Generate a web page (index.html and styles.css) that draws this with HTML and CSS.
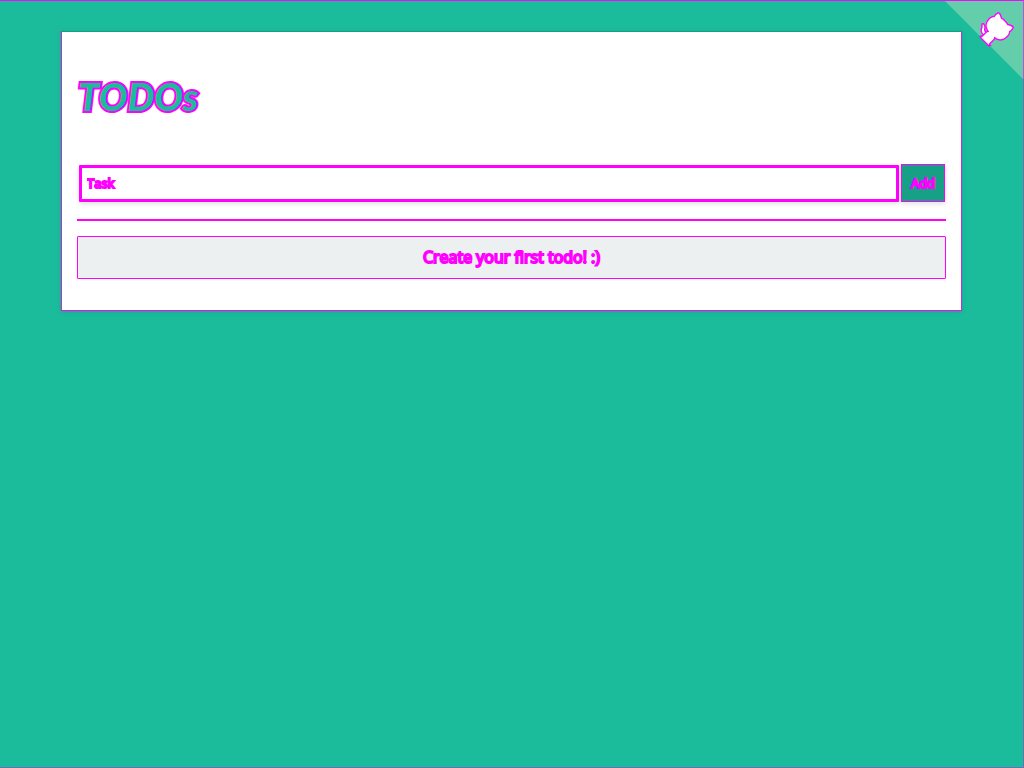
FILE: index.html
```html
<!DOCTYPE html>
<html lang="en">
<head>
<meta charset="utf-8">
<meta name="viewport" content="width=device-width, initial-scale=1">
<title>TODOs</title>
<link rel="stylesheet" href="styles.css">
</head>
<body>
<a class="github-corner" href="#" aria-label="View source on GitHub">
<svg viewBox="0 0 250 250" aria-hidden="true">
<path class="corner-bg" d="M0,0 L115,115 L130,115 L142,142 L250,250 L250,0 Z"/>
<path class="octo" d="M128.3,109.0 C113.8,99.7 119.0,89.6 119.0,89.6 C122.0,82.7 120.5,78.6 120.5,78.6 C119.2,72.0 123.4,76.3 123.4,76.3 C127.3,80.9 125.5,87.3 125.5,87.3 C122.9,97.6 130.6,101.9 134.4,103.2"/>
<path class="octo" d="M115.0,115.0 C114.9,115.1 118.7,116.5 119.8,115.4 L133.7,101.6 C136.9,99.2 139.9,98.4 142.2,98.6 C133.8,88.0 127.5,74.4 143.8,58.0 C148.5,53.4 154.0,51.2 159.7,51.0 C160.3,49.4 163.2,43.6 171.4,40.1 C171.4,40.1 176.1,42.5 178.8,56.2 C183.1,58.6 187.2,61.8 190.9,65.4 C194.5,69.0 197.7,73.2 200.1,77.6 C213.8,80.2 216.3,84.9 216.3,84.9 C212.7,93.1 206.9,96.0 205.4,96.6 C205.1,102.4 203.0,107.8 198.3,112.5 C181.9,128.9 168.3,122.5 157.7,114.1 C157.9,116.9 156.7,120.9 152.7,124.9 L141.0,136.5 C139.8,137.7 141.6,141.9 141.8,141.8 Z"/>
</svg>
</a>
<main class="card">
<h1 class="title">TODOs</h1>
<form class="task-form">
<input class="task-input" type="text" placeholder="Task" aria-label="Task">
<button class="add-button" type="button">Add</button>
</form>
<hr class="divider">
<p class="notice">Create your first todo! :)</p>
</main>
</body>
</html>
```
FILE: styles.css
```css
* {
  box-sizing: border-box;
}

body {
  min-height: 100vh;
  margin: 0;
  padding: 30px 61px;
  border-top: 1px solid #f0f;
  border-right: 1px solid #6f6cb8;
  border-bottom: 1px solid #6f6cb8;
  background: #1abc9c;
  font-family: "Open Sans", "Noto Sans", sans-serif;
}

.github-corner {
  position: absolute;
  top: 0;
  right: 0;
  border-top: 1px solid #f0f;
  border-right: 1px solid #c050d0;
}

.github-corner svg {
  display: block;
  width: 78px;
  height: 78px;
}

.corner-bg {
  fill: #64ceaa;
}

.octo {
  fill: #fff;
  stroke: #f0f;
  stroke-width: 9;
  paint-order: stroke fill;
}

.card {
  padding: 36px 15px 31px;
  border: 1px solid #c030d0;
  border-top-color: #16a085;
  border-bottom-color: #f0f;
  background: #fff;
  box-shadow: 0 1px 5px rgba(0, 0, 0, 0.12);
}

.title {
  margin: 0 0 40px;
  padding-left: 1px;
  color: #1abc9c;
  font-family: Lato, sans-serif;
  font-size: 38px;
  font-style: italic;
  font-weight: 900;
  line-height: 56px;
  -webkit-text-stroke: 4px #f0f;
  paint-order: stroke fill;
}

.task-form {
  display: flex;
  gap: 2px;
  padding-right: 1px;
}

.task-input {
  flex: 1;
  min-width: 0;
  height: 37px;
  margin: 1px 0 0 2px;
  padding: 0 5px 1px;
  border: 3px solid #f0f;
  border-radius: 1px;
  background: #fff;
  box-shadow: 0 2px 5px rgba(0, 0, 0, 0.12);
  font-family: inherit;
  font-size: 13px;
}

.task-input::placeholder {
  color: #f0f;
  opacity: 1;
  -webkit-text-stroke: 2px #f0f;
}

.add-button {
  width: 44px;
  height: 38px;
  padding: 0;
  border: 1px solid #f0f;
  background: #16a085;
  box-shadow: 0 2px 5px rgba(0, 0, 0, 0.12);
  color: #f0f;
  font-family: inherit;
  font-size: 13px;
  -webkit-text-stroke: 2px #f0f;
}

.divider {
  height: 2px;
  margin: 17px 0 15px;
  border: 0;
  background: #f0f;
}

.notice {
  margin: 0;
  padding: 8px;
  border: 1px solid #f0f;
  border-radius: 1px;
  background: #ecf0f1;
  color: #f0f;
  font-size: 16px;
  line-height: 25px;
  text-align: center;
  -webkit-text-stroke: 2px #f0f;
}
```
